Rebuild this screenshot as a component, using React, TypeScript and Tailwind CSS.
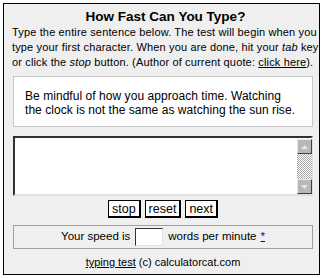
import React from 'react'

const font = { fontFamily: '"Liberation Sans", Arial, sans-serif' }

function ScrollButton({ dir }: { dir: 'up' | 'down' }) {
  return (
    <div className="flex h-[15px] w-[15px] items-center justify-center border border-t-[#e8e8e8] border-l-[#e8e8e8] border-r-[#404040] border-b-[#404040] bg-[#b8b8b8]">
      <svg width="7" height="4" viewBox="0 0 7 4">
        {dir === 'up' ? (
          <polygon points="3.5,0 7,4 0,4" fill="#e8e8e8" />
        ) : (
          <polygon points="0,0 7,0 3.5,4" fill="#e8e8e8" />
        )}
      </svg>
    </div>
  )
}

function PlainButton({ label }: { label: string }) {
  return (
    <button className="h-[18px] border border-black border-r-[2px] border-b-[2px] bg-white px-[3px] text-[12.5px] leading-[14px] text-black">
      {label}
    </button>
  )
}

export default function App() {
  return (
    <div className="min-h-screen bg-white pl-[3px] pt-[3px] text-black" style={font}>
      <div className="flex h-[272px] w-[317px] flex-col border border-black bg-[#efefef] pl-[8px]">
        <h1 className="mt-[5px] text-center text-[13.5px] font-bold leading-[16px]">How Fast Can You Type?</h1>
        <p className="whitespace-nowrap text-[11px] leading-[15px] tracking-[0.15px]">
          Type the entire sentence below. The test will begin when you
          <br />
          type your first character. When you are done, hit your <i>tab</i> key
          <br />
          or click the <i>stop</i> button. (Author of current quote: <u>click here</u>).
        </p>

        <div className="ml-[1px] mt-[6px] h-[51px] w-[300px] whitespace-nowrap border border-[#c8c8c8] bg-white pl-[11px] pt-[12px] text-[12px] leading-[14px] tracking-[0.05px]">
          Be mindful of how you approach time. Watching
          <br />
          the clock is not the same as watching the sun rise.
        </div>

        <div className="ml-[1px] mt-[9px] flex h-[60px] w-[300px] border-[2px] border-t-[#303030] border-l-[#303030] border-r-[#e0e0e0] border-b-[#e0e0e0] bg-white">
          <div className="flex-1" />
          <div className="mr-[-1px] flex w-[15px] flex-col pt-[1px]">
            <ScrollButton dir="up" />
            <div className="flex-1 bg-[repeating-conic-gradient(#a8a8a8_0_25%,#ffffff_0_50%)] bg-[length:2px_2px]" />
            <ScrollButton dir="down" />
          </div>
        </div>

        <div className="ml-[1px] mt-[4px] flex w-[300px] justify-center gap-[4px]">
          <PlainButton label="stop" />
          <PlainButton label="reset" />
          <PlainButton label="next" />
        </div>

        <div className="ml-[1px] mt-[7px] flex h-[24px] w-[300px] items-center justify-center border border-[#a0a0a0] text-[11.5px]">
          <span>Your speed is</span>
          <span className="mx-[5px] h-[18px] w-[28px] border border-t-[#303030] border-l-[#303030] border-r-[#e0e0e0] border-b-[#e0e0e0] bg-white" />
          <span>words per minute</span>
          <span className="ml-[4px] text-[#0000cc] underline">*</span>
        </div>

        <div className="ml-[1px] mt-[6px] w-[300px] text-center text-[11px] leading-[14px]">
          <u>typing test</u> (c) calculatorcat.com
        </div>
      </div>
    </div>
  )
}
